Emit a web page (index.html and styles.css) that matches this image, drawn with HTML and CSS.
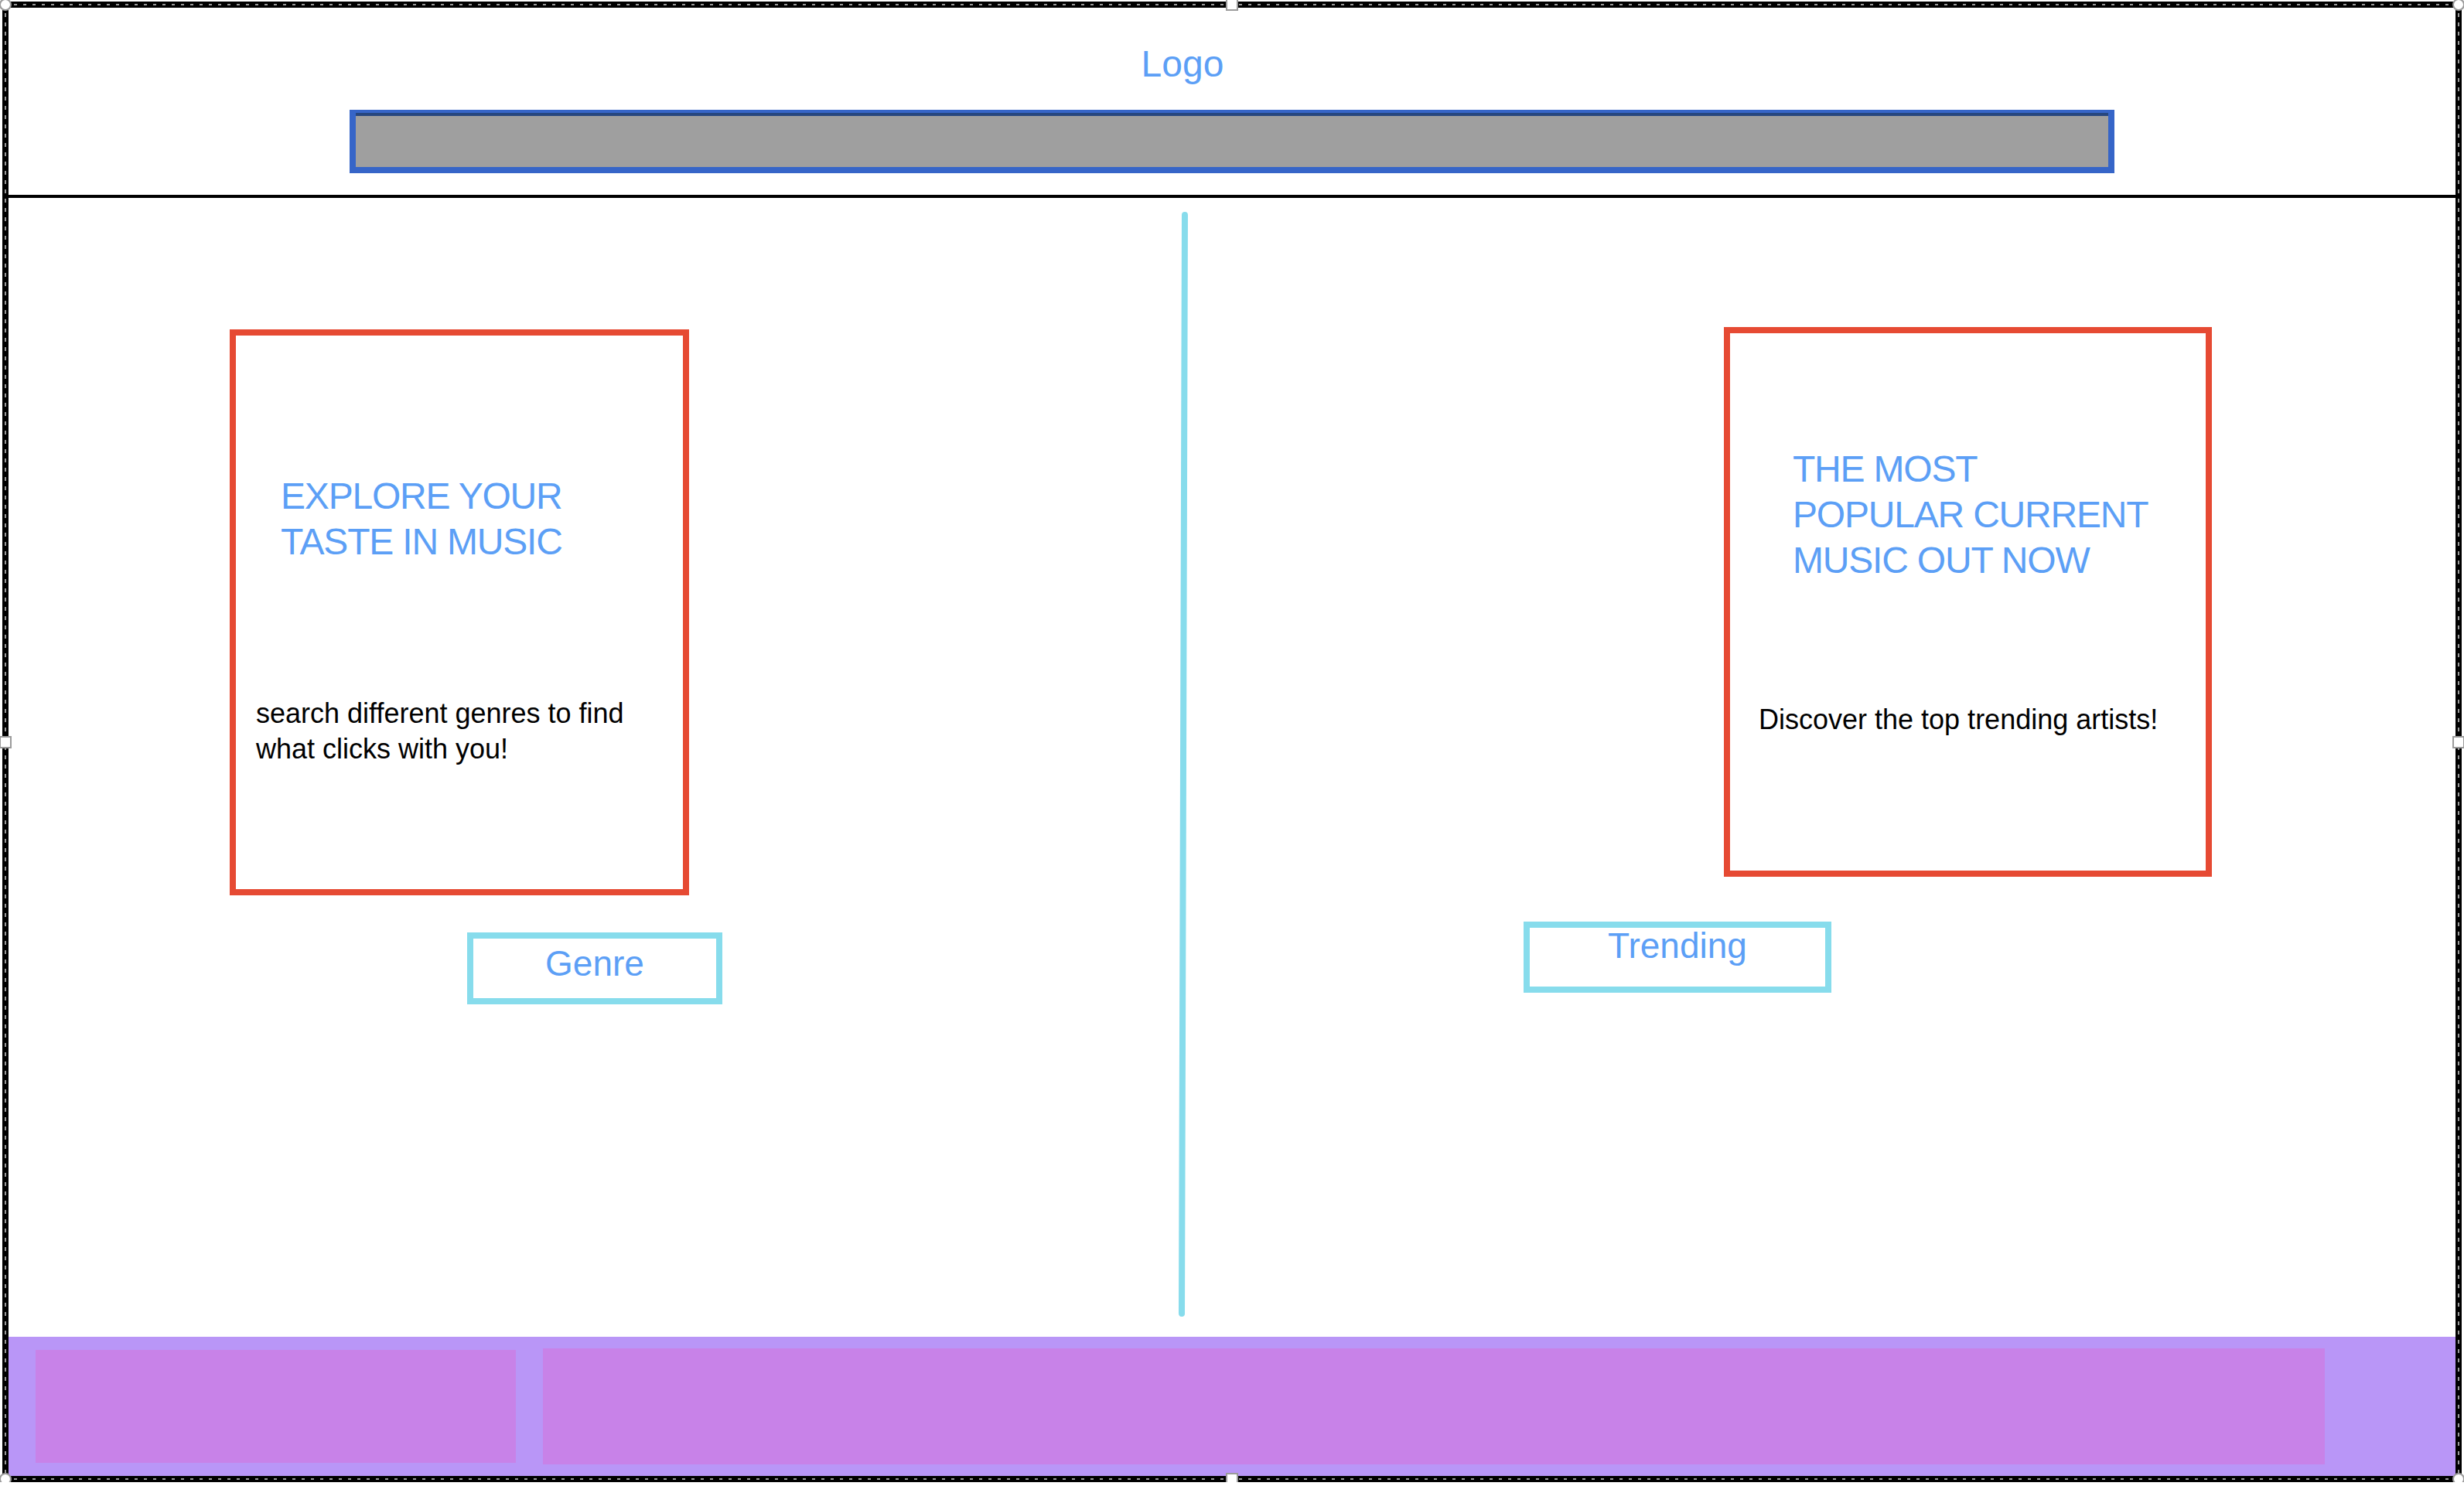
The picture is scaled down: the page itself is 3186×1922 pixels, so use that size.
FILE: index.html
```html
<!DOCTYPE html>
<html lang="en">
<head>
<meta charset="utf-8">
<title>Music Wireframe</title>
<link rel="stylesheet" href="styles.css">
</head>
<body>
<div class="frame">
  <header class="header">
    <div class="logo">Logo</div>
    <div class="search-bar"></div>
  </header>
  <main class="main">
    <section class="col col-left">
      <div class="card card-left">
        <h2 class="card-title title-left">EXPLORE YOUR<br>TASTE IN MUSIC</h2>
        <p class="card-text text-left">search different genres to find<br>what clicks with you!</p>
      </div>
      <div class="btn btn-genre">Genre</div>
    </section>
    <div class="divider"></div>
    <section class="col col-right">
      <div class="card card-right">
        <h2 class="card-title title-right">THE MOST<br>POPULAR CURRENT<br>MUSIC OUT NOW</h2>
        <p class="card-text text-right">Discover the top trending artists!</p>
      </div>
      <div class="btn btn-trending">Trending</div>
    </section>
  </main>
  <footer class="footer">
    <div class="footer-block footer-left"></div>
    <div class="footer-block footer-right"></div>
  </footer>
  <span class="handle circle h-tl"></span>
  <span class="handle square h-tm"></span>
  <span class="handle circle h-tr"></span>
  <span class="handle square h-ml"></span>
  <span class="handle square h-mr"></span>
  <span class="handle circle h-bl"></span>
  <span class="handle square h-bm"></span>
  <span class="handle circle h-br"></span>
</div>
</body>
</html>
```
FILE: styles.css
```css
html, body {
  margin: 0;
  padding: 0;
  background: #ffffff;
  overflow: hidden;
}

body {
  font-family: "Liberation Sans", Arial, Helvetica, sans-serif;
  color: #000;
}

.frame {
  position: relative;
  box-sizing: border-box;
  margin: 2px 0 0 3px;
  width: 3180px;
  height: 1915px;
  border: 8px solid #000;
  display: flex;
  flex-direction: column;
  background: #fff;
}

.frame::before {
  content: "";
  position: absolute;
  top: -5px;
  left: -5px;
  right: -5px;
  bottom: -5px;
  pointer-events: none;
  background:
    linear-gradient(90deg, #9a9a9a 4px, transparent 4px) top left / 12px 2px repeat-x,
    linear-gradient(90deg, #9a9a9a 4px, transparent 4px) bottom left / 12px 2px repeat-x,
    linear-gradient(180deg, #9a9a9a 5px, transparent 5px) top left / 2px 12px repeat-y,
    linear-gradient(180deg, #9a9a9a 5px, transparent 5px) top right / 2px 12px repeat-y;
}

/* Header */
.header {
  box-sizing: border-box;
  height: 246px;
  border-bottom: 4px solid #000;
  padding-top: 48px;
  display: flex;
  flex-direction: column;
  align-items: center;
  flex-shrink: 0;
}

.logo {
  font-size: 48px;
  line-height: 50px;
  color: #5c9ff6;
  margin-right: 128px;
}

.search-bar {
  box-sizing: border-box;
  margin-top: 34px;
  width: 2282px;
  height: 82px;
  background: #9f9f9f;
  border: 8px solid #3665c8;
  border-top-width: 4px;
  box-shadow: inset 0 4px 0 #26467f;
}

/* Main */
.main {
  flex: 1;
  display: flex;
  min-height: 0;
}

.col {
  display: flex;
  flex-direction: column;
  align-items: flex-start;
  box-sizing: border-box;
}

.col-left {
  width: 1515px;
  flex-shrink: 0;
  padding-left: 286px;
}

.col-right {
  flex: 1;
  padding-left: 436px;
}

.divider {
  flex-shrink: 0;
  width: 8px;
  height: 1429px;
  margin-top: 18px;
  border-radius: 4px;
  background: #87dcec;
  transform: rotate(0.16deg);
}

.card {
  box-sizing: border-box;
  border: 8px solid #e64a33;
  background: #fff;
}

.card-left {
  margin-top: 170px;
  width: 594px;
  height: 732px;
}

.card-right {
  margin-top: 167px;
  margin-left: 259px;
  width: 631px;
  height: 711px;
}

.card-title {
  margin: 0;
  font-weight: normal;
  font-size: 48px;
  letter-spacing: -1.2px;
  line-height: 59px;
  color: #5c9ff6;
  white-space: nowrap;
}

.card-text {
  margin: 0;
  font-size: 36px;
  line-height: 46px;
  color: #000;
  white-space: nowrap;
}

.title-left {
  margin-top: 178px;
  margin-left: 58px;
}

.text-left {
  margin-top: 170px;
  margin-left: 26px;
}

.title-right {
  margin-top: 146px;
  margin-left: 81px;
}

.text-right {
  margin-top: 154px;
  margin-left: 37px;
}

/* Buttons */
.btn {
  box-sizing: border-box;
  border: 8px solid #87dcec;
  font-size: 46px;
  line-height: 46px;
  color: #5c9ff6;
  text-align: center;
}

.btn-genre {
  margin-top: 48px;
  margin-left: 307px;
  width: 330px;
  height: 93px;
  padding-top: 9px;
}

.btn-trending {
  margin-top: 58px;
  width: 398px;
  height: 92px;
  padding-top: 0;
}

/* Footer */
.footer {
  flex-shrink: 0;
  height: 180px;
  background: #b996f7;
  display: flex;
  align-items: center;
  gap: 35px;
  padding-left: 35px;
}

.footer-block {
  background: #c882e8;
}

.footer-left {
  width: 621px;
  height: 146px;
}

.footer-right {
  width: 2304px;
  height: 150px;
}

/* Selection handles */
.handle {
  position: absolute;
  box-sizing: border-box;
  width: 16px;
  height: 16px;
  background: #fff;
  border: 2px solid #9b9b9b;
  z-index: 2;
}

.circle {
  border-radius: 50%;
}

.h-tl { top: -12px; left: -12px; }
.h-tm { top: -12px; left: calc(50% - 8px); }
.h-tr { top: -12px; right: -12px; }
.h-ml { top: calc(50% - 8px); left: -12px; }
.h-mr { top: calc(50% - 8px); right: -12px; }
.h-bl { bottom: -12px; left: -12px; }
.h-bm { bottom: -12px; left: calc(50% - 8px); }
.h-br { bottom: -12px; right: -12px; }
```
